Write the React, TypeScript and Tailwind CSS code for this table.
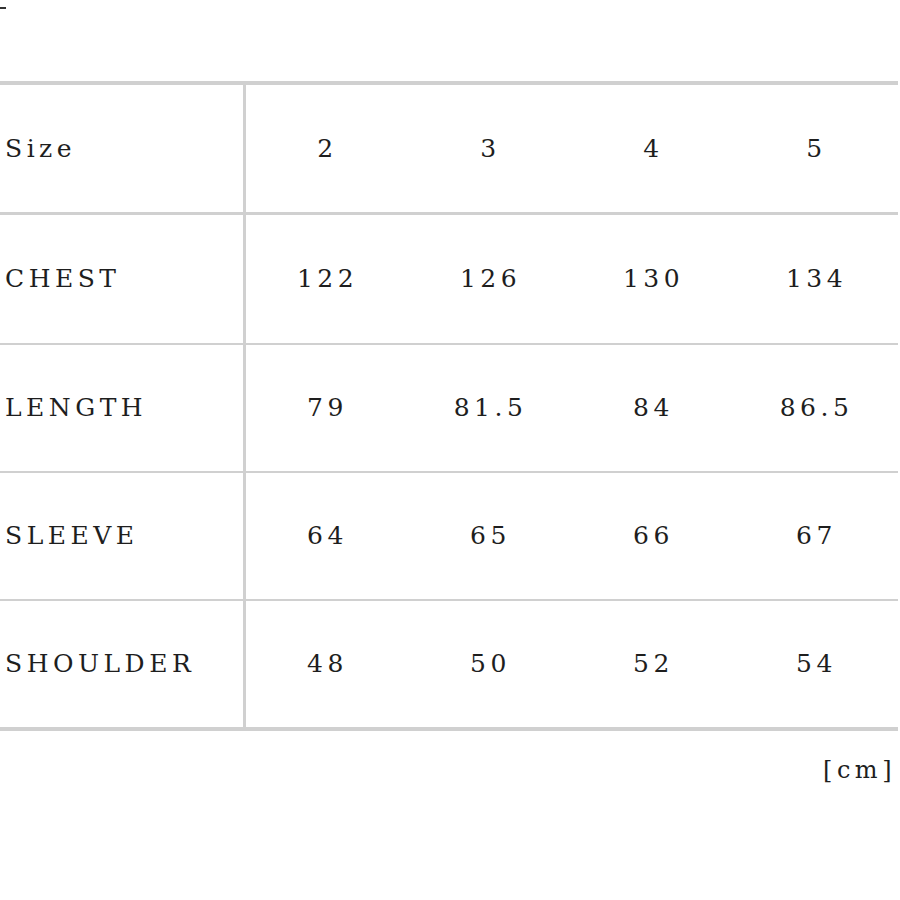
import React from "react";

const rows: [string, string[], string][] = [
  ["CHEST", ["122", "126", "130", "134"], "h-[130px]"],
  ["LENGTH", ["79", "81.5", "84", "86.5"], "h-[128px]"],
  ["SLEEVE", ["64", "65", "66", "67"], "h-[128px]"],
  ["SHOULDER", ["48", "50", "52", "54"], "h-[130px]"],
];

function Row({
  label,
  values,
  h,
  border,
}: {
  label: string;
  values: string[];
  h: string;
  border: string;
}) {
  return (
    <div className={`flex ${h} ${border} border-[#d0d0d0]`}>
      <div className="w-[246px] shrink-0 border-r-[3px] border-[#d0d0d0] flex items-center pl-[5px]">
        {label}
      </div>
      <div className="flex-1 grid grid-cols-4">
        {values.map((v, i) => (
          <div key={i} className="flex items-center justify-center">
            {v}
          </div>
        ))}
      </div>
    </div>
  );
}

export default function App() {
  return (
    <div
      className="w-[900px] h-[900px] bg-white text-[#1e1e1e] text-[25px] tracking-[4.5px]"
      style={{ fontFamily: '"DejaVu Serif", serif' }}
    >
      <div className="h-[81px] relative">
        <div className="absolute left-0 top-[7px] w-[6px] h-[2px] bg-[#333]" />
      </div>
      <div className="w-[898px] border-t-4 border-[#d0d0d0]">
        <Row label="Size" values={["2", "3", "4", "5"]} h="h-[130px]" border="border-b-[3px]" />
        {rows.map(([l, v, h], i) => (
          <Row
            key={l}
            label={l}
            values={v}
            h={h}
            border={i === rows.length - 1 ? "border-b-4" : "border-b-2"}
          />
        ))}
        <div className="flex justify-end pt-[24px] pr-[2px] text-[24px] leading-[30px]">[cm]</div>
      </div>
    </div>
  );
}
